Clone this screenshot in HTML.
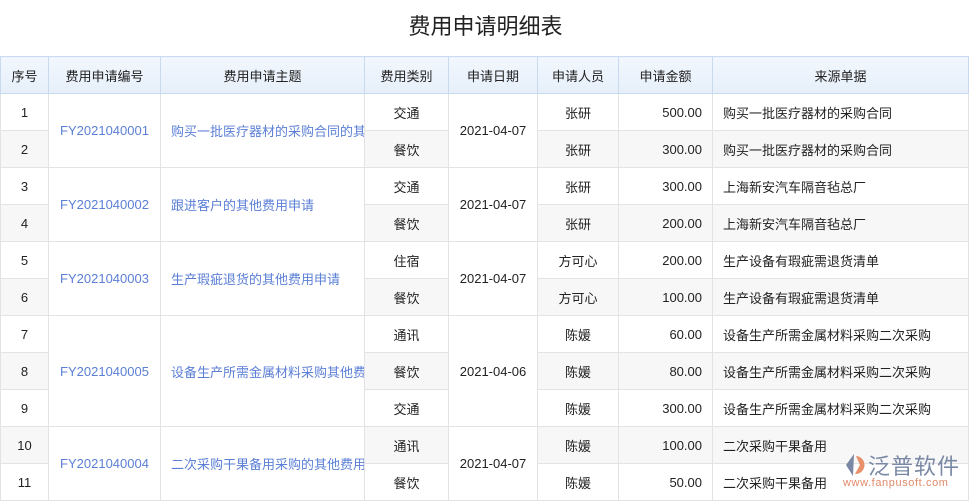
<!DOCTYPE html><html><head><meta charset="utf-8"><style>
body{margin:0;width:971px;height:500px;overflow:hidden;background:#fff;font-family:"Liberation Sans","Noto Sans CJK SC",sans-serif;}
h1{margin:0;height:56px;line-height:54px;text-align:center;font-size:22px;font-weight:normal;color:#222;}
table{border-collapse:collapse;table-layout:fixed;width:968px;font-size:13px;color:#222;}
td,th{border:1px solid #e3e3e3;height:36px;padding:0;text-align:center;white-space:nowrap;overflow:hidden;}
th{background:linear-gradient(#f2f7fd,#e6effa);font-weight:normal;border-color:#c9daf0;}
tr.e td{background:#f7f7f7}
tr td.m{background:#fff}
.b{color:#5b7fd6}.l{text-align:left;padding-left:10px}.r{text-align:right;padding-right:10px}
.logo{position:absolute;left:843px;top:449px;width:125px;}
</style></head><body>
<h1>费用申请明细表</h1>
<table>
<colgroup><col style="width:48px"><col style="width:112px"><col style="width:204px"><col style="width:84px"><col style="width:89px"><col style="width:81px"><col style="width:94px"><col style="width:256px"></colgroup>
<tr><th>序号</th><th>费用申请编号</th><th>费用申请主题</th><th>费用类别</th><th>申请日期</th><th>申请人员</th><th>申请金额</th><th>来源单据</th></tr>
<tr><td>1</td><td class="m b" rowspan="2">FY2021040001</td><td class="m b l" rowspan="2">购买一批医疗器材的采购合同的其</td><td>交通</td><td class="m" rowspan="2">2021-04-07</td><td>张研</td><td class="r">500.00</td><td class="l">购买一批医疗器材的采购合同</td></tr>
<tr class="e"><td>2</td><td>餐饮</td><td>张研</td><td class="r">300.00</td><td class="l">购买一批医疗器材的采购合同</td></tr>
<tr><td>3</td><td class="m b" rowspan="2">FY2021040002</td><td class="m b l" rowspan="2">跟进客户的其他费用申请</td><td>交通</td><td class="m" rowspan="2">2021-04-07</td><td>张研</td><td class="r">300.00</td><td class="l">上海新安汽车隔音毡总厂</td></tr>
<tr class="e"><td>4</td><td>餐饮</td><td>张研</td><td class="r">200.00</td><td class="l">上海新安汽车隔音毡总厂</td></tr>
<tr><td>5</td><td class="m b" rowspan="2">FY2021040003</td><td class="m b l" rowspan="2">生产瑕疵退货的其他费用申请</td><td>住宿</td><td class="m" rowspan="2">2021-04-07</td><td>方可心</td><td class="r">200.00</td><td class="l">生产设备有瑕疵需退货清单</td></tr>
<tr class="e"><td>6</td><td>餐饮</td><td>方可心</td><td class="r">100.00</td><td class="l">生产设备有瑕疵需退货清单</td></tr>
<tr><td>7</td><td class="m b" rowspan="3">FY2021040005</td><td class="m b l" rowspan="3">设备生产所需金属材料采购其他费</td><td>通讯</td><td class="m" rowspan="3">2021-04-06</td><td>陈媛</td><td class="r">60.00</td><td class="l">设备生产所需金属材料采购二次采购</td></tr>
<tr class="e"><td>8</td><td>餐饮</td><td>陈媛</td><td class="r">80.00</td><td class="l">设备生产所需金属材料采购二次采购</td></tr>
<tr><td>9</td><td>交通</td><td>陈媛</td><td class="r">300.00</td><td class="l">设备生产所需金属材料采购二次采购</td></tr>
<tr class="e"><td>10</td><td class="m b" rowspan="2">FY2021040004</td><td class="m b l" rowspan="2">二次采购干果备用采购的其他费用</td><td>通讯</td><td class="m" rowspan="2">2021-04-07</td><td>陈媛</td><td class="r">100.00</td><td class="l">二次采购干果备用</td></tr>
<tr><td>11</td><td>餐饮</td><td>陈媛</td><td class="r">50.00</td><td class="l">二次采购干果备用</td></tr>
</table>
<div class="logo"><svg width="24" height="26" viewBox="0 0 24 26" style="vertical-align:middle"><path d="M11 2L3 13l7 11z" fill="#7a88a6"/><path d="M13 4a9 9 0 1 1 -1 18l5-9z" fill="#e8906a"/></svg><span style="font-size:22px;color:#7a88a6;vertical-align:middle;letter-spacing:1px;margin-left:1px">泛普软件</span><div style="font-size:11px;color:#e08a6a;margin-top:-4px;letter-spacing:0.6px">www.fanpusoft.com</div></div>
</body></html>
